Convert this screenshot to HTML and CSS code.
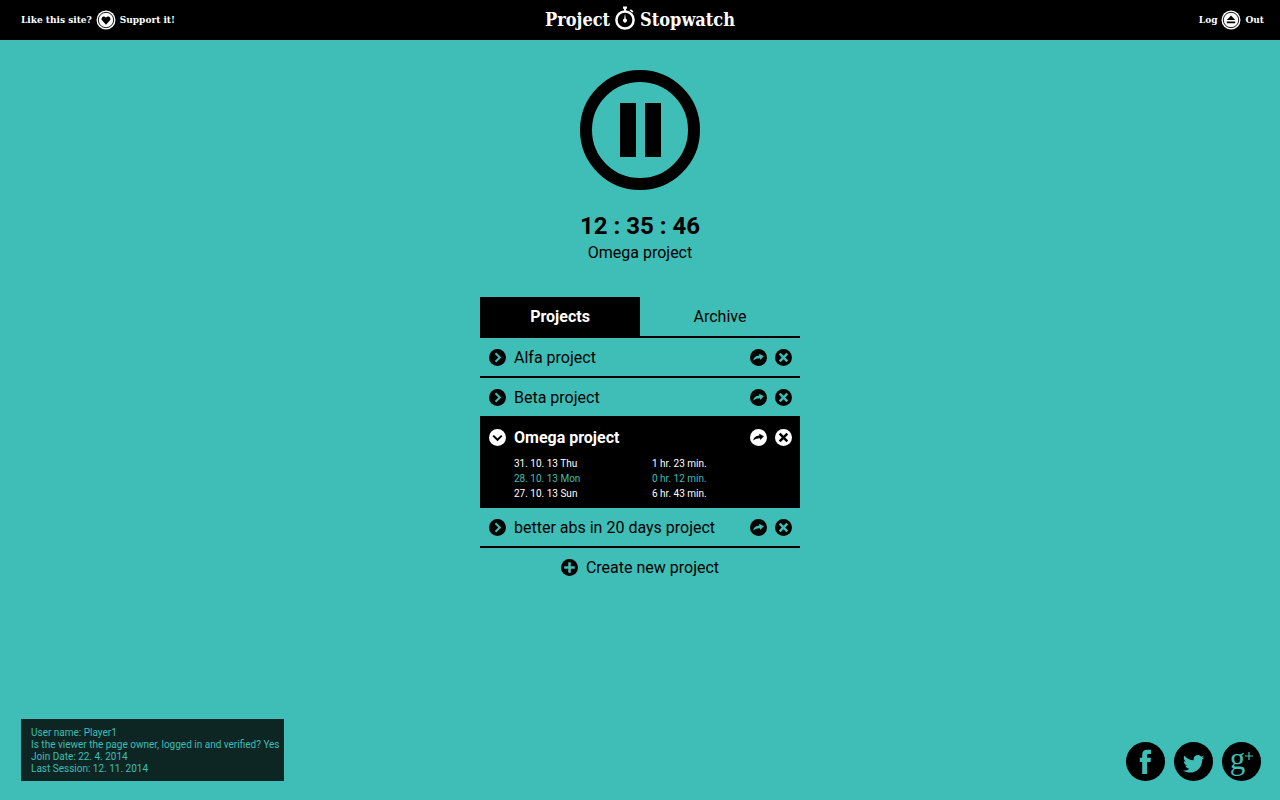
FILE: index.html
```html
<!DOCTYPE html>
<html lang="en">
<head>
<meta charset="utf-8">
<meta name="viewport" content="width=device-width, initial-scale=1">
<title>Project Stopwatch</title>
<link rel="stylesheet" href="styles.css">
</head>
<body>
<svg class="sprite" aria-hidden="true">
  <symbol id="chevron" viewBox="0 0 17 17"><circle cx="8.5" cy="8.5" r="8.5" fill="currentColor"/><path class="cut" d="M6.500 4.300l4.300 4.200-4.300 4.200"/></symbol>
  <symbol id="chevron-down" viewBox="0 0 17 17"><circle cx="8.5" cy="8.5" r="8.5" fill="currentColor"/><path class="cut" d="M4.200 6.600l4.300 4.200 4.300-4.200"/></symbol>
  <symbol id="share" viewBox="0 0 17 17"><circle cx="8.5" cy="8.5" r="8.5" fill="currentColor"/><path class="cut-fill" d="M3.300 11.600c.4-3.300 2.900-4.700 6-5V4.700l4.500 2.600-3.400 3.600-.4-1.700c-2.700 0-4.700.8-6.700 2.400z"/></symbol>
  <symbol id="cross" viewBox="0 0 17 17"><circle cx="8.5" cy="8.5" r="8.5" fill="currentColor"/><path class="cut cut-bold" d="M4.700 4.700l7.600 7.600M12.300 4.700l-7.600 7.600"/></symbol>
  <symbol id="plus" viewBox="0 0 17 17"><circle cx="8.5" cy="8.5" r="8.5" fill="currentColor"/><path class="cut cut-bold" d="M8.500 3.200v10.600M3.200 8.500h10.600"/></symbol>
</svg>

<header class="topbar">
  <a class="topbar-link topbar-start" href="#support">Like this site?
    <svg class="badge" viewBox="0 0 20 20" aria-hidden="true"><circle cx="10" cy="10" r="9.500" fill="#fff"/><circle cx="10" cy="10" r="7.700" fill="none" stroke="#000" stroke-width=".9"/><path fill="#000" d="M10 14.800L6 10.300C4.300 7.800 7.700 4.900 10 7.500c2.300-2.600 5.700.3 4 2.800z"/></svg>
    Support it!</a>
  <a class="brand" href="#home">Project
    <svg class="brand-icon" viewBox="0 0 20 24" aria-hidden="true"><circle cx="10" cy="14" r="8.600" fill="none" stroke="#fff" stroke-width="2.500"/><path fill="#fff" d="M8 .5h4v2.300H8zM9 2h2v4H9zM15.800 3.200l2.600 2-1 1.400-2.600-2zM10 7.500l.8 5.300a1.900 1.900 0 1 1-1.600 0z"/></svg>
    Stopwatch</a>
  <a class="topbar-link topbar-end" href="#logout">Log
    <svg class="badge" viewBox="0 0 20 20" aria-hidden="true"><circle cx="10" cy="10" r="9.500" fill="#fff"/><circle cx="10" cy="10" r="7.700" fill="none" stroke="#000" stroke-width=".9"/><path fill="#000" d="M10 5.500l4.200 4.600H5.800zM5.800 11.500h8.400v1.700H5.800z"/></svg>
    Out</a>
</header>

<main class="main">
  <section class="timer">
    <button class="pause" type="button" aria-label="Pause">
      <svg viewBox="0 0 120 120"><circle cx="60" cy="60" r="54" fill="none" stroke="#000" stroke-width="12"/><path d="M40 33h16v54H40zM65 33h16v54H65z"/></svg>
    </button>
    <h1 class="time">12 : 35 : 46</h1>
    <p class="current">Omega project</p>
  </section>

  <section class="panel">
    <div class="tabs">
      <button class="tab tab-active" type="button">Projects</button>
      <button class="tab" type="button">Archive</button>
    </div>
    <ul class="projects">
      <li class="project">
        <div class="project-row">
          <button class="icon-button" type="button" aria-label="Expand"><svg><use href="#chevron"/></svg></button>
          <span class="project-name">Alfa project</span>
          <button class="icon-button" type="button" aria-label="Share"><svg><use href="#share"/></svg></button>
          <button class="icon-button" type="button" aria-label="Remove"><svg><use href="#cross"/></svg></button>
        </div>
      </li>
      <li class="project">
        <div class="project-row">
          <button class="icon-button" type="button" aria-label="Expand"><svg><use href="#chevron"/></svg></button>
          <span class="project-name">Beta project</span>
          <button class="icon-button" type="button" aria-label="Share"><svg><use href="#share"/></svg></button>
          <button class="icon-button" type="button" aria-label="Remove"><svg><use href="#cross"/></svg></button>
        </div>
      </li>
      <li class="project project-open">
        <div class="project-row">
          <button class="icon-button" type="button" aria-label="Collapse"><svg><use href="#chevron-down"/></svg></button>
          <span class="project-name">Omega project</span>
          <button class="icon-button" type="button" aria-label="Share"><svg><use href="#share"/></svg></button>
          <button class="icon-button" type="button" aria-label="Remove"><svg><use href="#cross"/></svg></button>
        </div>
        <table class="sessions">
          <tbody>
            <tr><td>31. 10. 13 Thu</td><td>1 hr. 23 min.</td></tr>
            <tr class="session-current"><td>28. 10. 13 Mon</td><td>0 hr. 12 min.</td></tr>
            <tr><td>27. 10. 13 Sun</td><td>6 hr. 43 min.</td></tr>
          </tbody>
        </table>
      </li>
      <li class="project">
        <div class="project-row">
          <button class="icon-button" type="button" aria-label="Expand"><svg><use href="#chevron"/></svg></button>
          <span class="project-name">better abs in 20 days project</span>
          <button class="icon-button" type="button" aria-label="Share"><svg><use href="#share"/></svg></button>
          <button class="icon-button" type="button" aria-label="Remove"><svg><use href="#cross"/></svg></button>
        </div>
      </li>
    </ul>
    <button class="create" type="button"><svg><use href="#plus"/></svg><span>Create new project</span></button>
  </section>
</main>

<footer class="footer">
  <div class="user-info">
    <p>User name: Player1</p>
    <p>Is the viewer the page owner, logged in and verified? Yes</p>
    <p>Join Date: 22. 4. 2014</p>
    <p>Last Session: 12. 11. 2014</p>
  </div>
  <nav class="social" aria-label="Social">
    <a href="#facebook" aria-label="Facebook"><svg viewBox="0 0 39 39"><path d="M16.200 32V20H13.800v-4.200h2.400v-3c0-3.400 1.600-5.100 5-5.100h3.800v4.200h-2.300c-1.300 0-1.700.5-1.700 1.700v2.200h4l-.5 4.200H21v12z"/></svg></a>
    <a href="#twitter" aria-label="Twitter"><svg viewBox="10.500 10.500 20.500 18.500" class="bird"><path d="M30.500 14.300c-.8.300-1.500.5-2.300.6.800-.5 1.400-1.200 1.700-2.200-.8.500-1.600.8-2.600 1-3-3.200-7.700-.6-6.800 3.600-3.500-.2-6.500-1.800-8.700-4.500-1.100 2-.6 4.300 1.300 5.600-.7 0-1.300-.2-1.900-.5 0 2 1.400 3.700 3.300 4.100-.6.200-1.200.2-1.900.1.500 1.700 2.100 2.900 3.900 2.900-1.700 1.300-3.800 1.900-6 1.700 8.200 5.100 18-.2 17.900-10.100.8-.6 1.600-1.400 2.100-2.300z"/></svg></a>
    <a class="google" href="#google" aria-label="Google plus"><span>g</span><svg viewBox="0 0 8 8"><path d="M3.400 0h1.200v3.400H8v1.200H4.600V8H3.400V4.600H0V3.400h3.400z"/></svg></a>
  </nav>
</footer>
</body>
</html>
```
FILE: styles.css
```css
:root {
  --teal: #3fbdb7;
  --cut: var(--teal);
}
* { box-sizing: border-box; }
body {
  margin: 0;
  min-height: 100vh;
  display: flex;
  flex-direction: column;
  background: var(--teal);
  color: #000;
  font: 16px/20px Roboto, sans-serif;
}
button {
  padding: 0;
  border: 0;
  background: none;
  color: inherit;
  font: inherit;
  cursor: pointer;
}
a { color: inherit; text-decoration: none; }
p, h1, ul { margin: 0; padding: 0; }
svg { display: block; }
.sprite { position: absolute; width: 0; height: 0; }
.cut { fill: none; stroke: var(--cut); stroke-width: 2; }
.cut-bold { stroke-width: 2.5; }
.cut-fill { fill: var(--cut); }

.topbar {
  display: grid;
  grid-template-columns: 1fr auto 1fr;
  align-items: center;
  height: 40px;
  padding: 0 16px;
  background: #000;
  color: #fff;
  font-family: "DejaVu Serif Condensed", "DejaVu Serif", serif;
  font-weight: 700;
}
.topbar-link {
  display: flex;
  align-items: center;
  gap: 4px;
  font-size: 10px;
}
.topbar-start { padding-left: 5px; }
.topbar-end { justify-self: end; }
.badge { width: 20px; height: 20px; }
.brand {
  display: flex;
  align-items: center;
  gap: 5px;
  font-size: 18px;
}
.brand-icon { width: 20px; height: 24px; margin-bottom: 4px; }

.main { flex: 1; }
.timer {
  display: flex;
  flex-direction: column;
  align-items: center;
  padding-top: 30px;
}
.pause svg { width: 120px; height: 120px; }
.time {
  margin-top: 20px;
  font-size: 24px;
  line-height: 32px;
  font-weight: 700;
}
.current { line-height: 22px; }

.panel {
  width: 320px;
  max-width: 100%;
  margin: 33px auto 0;
}
.tabs {
  display: grid;
  grid-template-columns: 1fr 1fr;
  border-bottom: 2px solid #000;
}
.tab { height: 39px; }
.tab-active { background: #000; color: #fff; font-weight: 700; }
.projects { list-style: none; }
.project { border-bottom: 2px solid #000; }
.project-row {
  display: flex;
  align-items: center;
  gap: 8px;
  height: 38px;
  padding: 0 8px 0 9px;
}
.project-name { flex: 1; padding-top: 1px; }
.icon-button svg, .create svg { width: 17px; height: 17px; }
.project-open {
  --cut: #000;
  padding-bottom: 5px;
  background: #000;
  color: #fff;
}
.project-open .project-name { font-weight: 700; }
.sessions {
  width: 100%;
  border-collapse: collapse;
  font-size: 10px;
  line-height: 15px;
}
.sessions td { width: 148px; padding: 0; }
.sessions td:first-child { width: 172px; padding-left: 34px; }
.session-current { color: var(--teal); }
.create {
  display: flex;
  align-items: center;
  justify-content: center;
  gap: 8px;
  width: 100%;
  height: 38px;
}
.create span { padding-top: 1px; }

.footer {
  display: flex;
  align-items: flex-end;
  justify-content: space-between;
  padding: 0 19px 19px 21px;
}
.user-info {
  padding: 8px 4px 6px 10px;
  background: #0d2624;
  color: var(--teal);
  font-size: 10px;
  line-height: 12px;
}
.social { display: flex; gap: 9px; }
.social a {
  display: flex;
  width: 39px;
  height: 39px;
  border-radius: 50%;
  background: #000;
  color: var(--teal);
}
.social path { fill: var(--teal); }
.social .bird { width: 22px; height: 20px; margin: 11px 0 0 9px; }
.social .google {
  justify-content: center;
  font: 31px/33px "Liberation Serif", serif;
}
.google svg { width: 8px; height: 8px; margin-top: 10px; }
```
